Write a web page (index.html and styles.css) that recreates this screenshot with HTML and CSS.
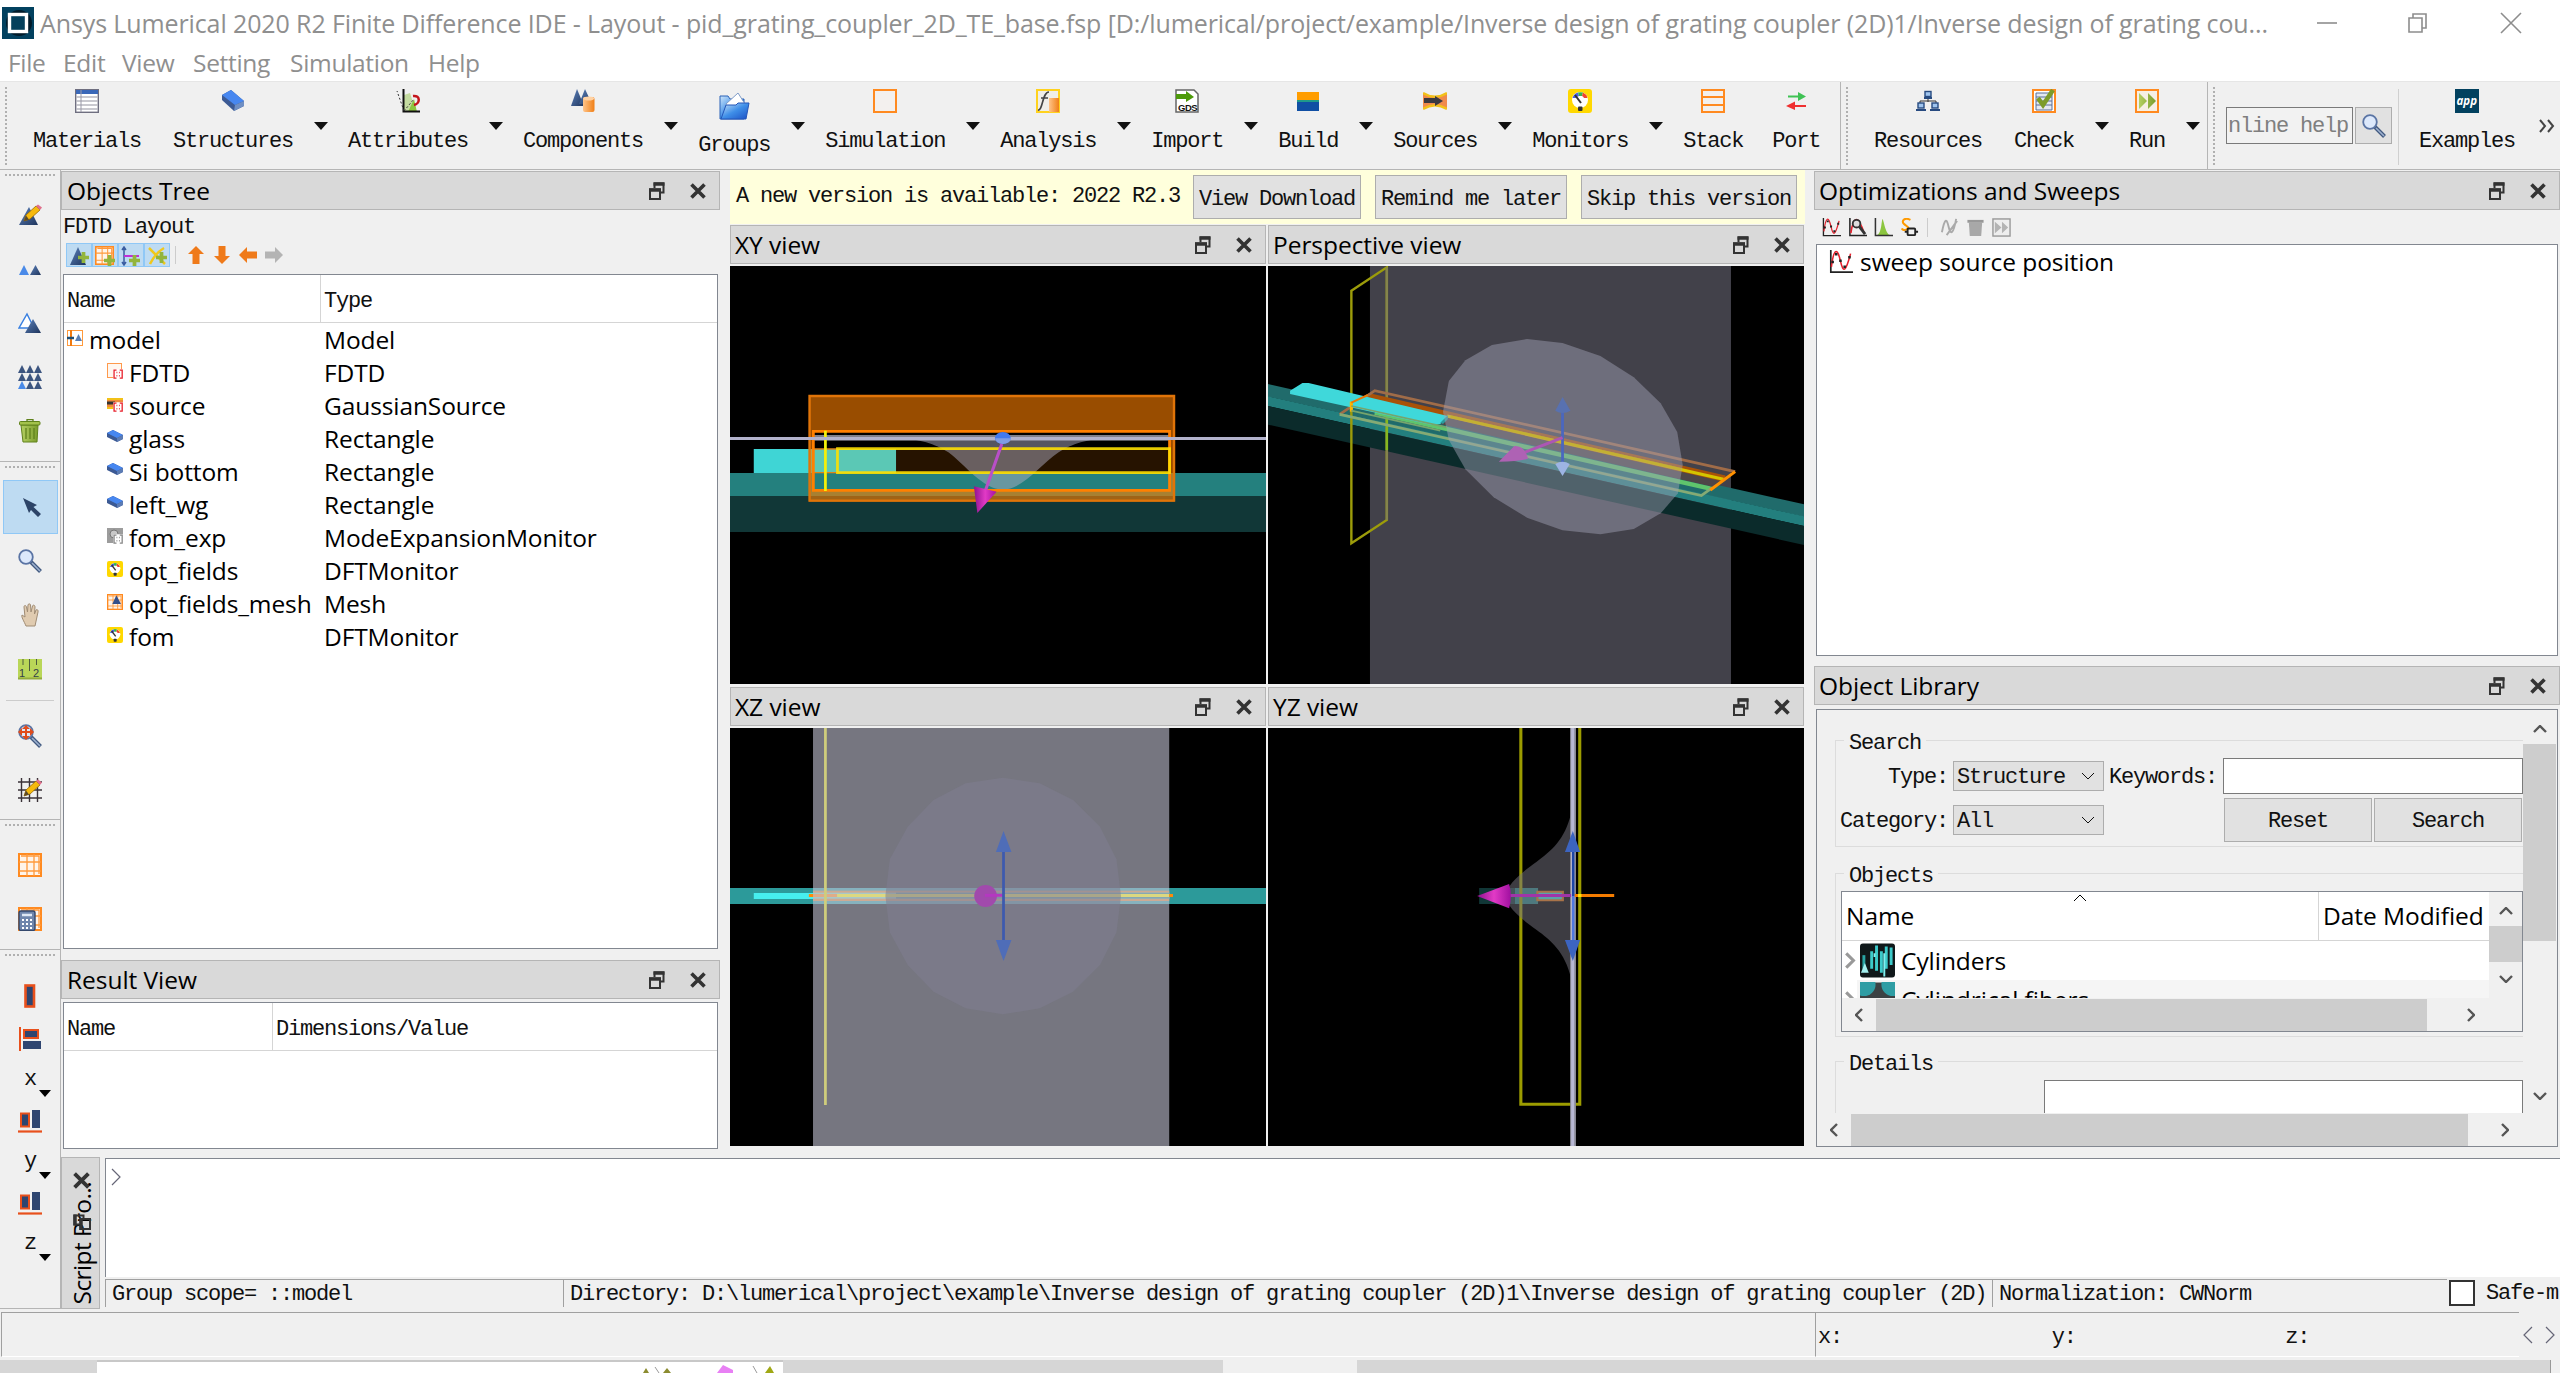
FILE: index.html
```html
<!DOCTYPE html>
<html lang="en">
<head>
<meta charset="utf-8">
<title>Ansys Lumerical 2020 R2 Finite Difference IDE</title>
<link rel="stylesheet" href="styles.css">
</head>
<body>
<svg class="defs" width="0" height="0">
  <defs>
    <linearGradient id="navy" x1="0" y1="0" x2="1" y2="1"><stop offset="0" stop-color="#5d83bd"/><stop offset="1" stop-color="#1f355c"/></linearGradient>
    <linearGradient id="barrel" x1="0" y1="0" x2="1" y2="0"><stop offset="0" stop-color="#ffc489"/><stop offset="1" stop-color="#f07f16"/></linearGradient>
    <linearGradient id="folder" x1="0" y1="0" x2="1" y2="1"><stop offset="0" stop-color="#cfe6fa"/><stop offset=".5" stop-color="#3f8fe8"/><stop offset="1" stop-color="#1a4fc4"/></linearGradient>
    <linearGradient id="cone" x1="0" y1="0" x2="1" y2="0"><stop offset="0" stop-color="#8e128e"/><stop offset=".5" stop-color="#e23ac6"/><stop offset="1" stop-color="#a010a0"/></linearGradient>
    <linearGradient id="green" x1="0" y1="0" x2="1" y2="0"><stop offset="0" stop-color="#b4cf62"/><stop offset="1" stop-color="#7a9c2c"/></linearGradient>
  </defs>
  <symbol id="float" viewBox="0 0 16 18"><path d="M5.500 6V1.500H14.500V10.500H11" fill="none" stroke="#333" stroke-width="2"/><path d="M4.500 2H15.500" stroke="#333" stroke-width="3.500"/><path d="M1 7.500H11V17H1Z" fill="none" stroke="#333" stroke-width="2"/><path d="M0 8H12" stroke="#333" stroke-width="3.500"/></symbol>
  <symbol id="close" viewBox="0 0 16 16"><path d="M1.500 1.500L14.500 14.500M14.500 1.500L1.500 14.500" stroke="#333" stroke-width="3.600" fill="none"/></symbol>
  <symbol id="pencil" viewBox="0 0 24 24"><path d="M6 18L8 12L18 3L22 7L12 16Z" fill="#f6b90c" stroke="#9a6a00" stroke-width=".8"/><path d="M6 18L8 12.500L11 16.500Z" fill="#5b4a2a"/><path d="M18 3L20 1.500L24 4.500L22 7Z" fill="#e0708c"/></symbol>
  <symbol id="box" viewBox="0 0 24 24"><path d="M1 6L10 1L23 12V17L13 22L1 11Z" fill="#3c5a94"/><path d="M1 6L10 1L23 12L14 16Z" fill="#4787f0"/><path d="M14 16L23 12V17L13 22Z" fill="#6f8fc4"/></symbol>
  <symbol id="boxs" viewBox="0 0 16 16"><path d="M0 4L6 1L16 6V10L10 13L0 8Z" fill="#3c5a94"/><path d="M0 4L6 1L16 6L10 9Z" fill="#4787f0"/><path d="M10 9L16 6V10L10 13Z" fill="#5c7cb4"/></symbol>
  <symbol id="gauge" viewBox="0 0 24 24"><rect width="24" height="24" rx="3" fill="#ffd800"/><circle cx="12" cy="11" r="8" fill="#fff"/><path d="M4.500 9A8 8 0 0 1 10 3.500L11 7A5 5 0 0 0 8 9Z" fill="#4a60e8"/><path d="M10 3.500A8 8 0 0 1 15 3.600L14 7H11Z" fill="#35b64a"/><path d="M15 3.600A8 8 0 0 1 19.500 9L16 9A5 5 0 0 0 14 7Z" fill="#f0442c"/><path d="M7 6L13 14" stroke="#333" stroke-width="2"/><rect x="10" y="17.500" width="4.500" height="4.500" rx="1" fill="#333"/></symbol>
  <symbol id="lens" viewBox="0 0 24 24"><path d="M13 13L22.500 22.500" stroke="#41597f" stroke-width="4"/><path d="M14 14L22 22" stroke="#9fb2d0" stroke-width="1.600"/><circle cx="8" cy="8" r="6.800" fill="#dce8fb" stroke="#5a74a4" stroke-width="1.800"/></symbol>
  <symbol id="sweep" viewBox="0 0 20 20"><path d="M1.500 0V18.500H20" stroke="#222" stroke-width="1.400" fill="none"/><path d="M2 14C4 -2 7 -2 9.500 9S14 18 18 3" stroke="#e4202c" stroke-width="1.300" fill="none"/><path d="M3 10h.1M6 3.500h.1M9.500 9h.1M13 14h.1M17 6h.1" stroke="#222" stroke-width="2" stroke-linecap="square"/></symbol>
  <symbol id="grid" viewBox="0 0 24 24"><rect x="1" y="1" width="22" height="22" fill="#fff4ea" stroke="#ff8a20" stroke-width="2"/><path d="M1 9H23M1 18H23M9 1V23M16 1V23M3 3H21V21" stroke="#ff9a3c" stroke-width="1.300" fill="none"/></symbol>
  <symbol id="script" viewBox="0 0 16 16"><rect x="4" y="4" width="12" height="12" fill="#fff"/><path d="M8 5H5V15H8M12 5H15V15H12M8 8h1M11 8h1M8 12h1M11 12h1" stroke="currentColor" stroke-width="1.600" fill="none"/></symbol>
  <symbol id="plus" viewBox="0 0 10 10"><path d="M3.300 0H6.700V3.300H10V6.700H6.700V10H3.300V6.700H0V3.300H3.300Z" fill="#93b53c"/></symbol>
  <symbol id="uparr" viewBox="0 0 18 18"><path d="M9 0L17 8H12.500V18H5.500V8H1Z"/></symbol>
  <symbol id="chev" viewBox="0 0 14 8"><path d="M1 1L7 7L13 1" fill="none" stroke="currentColor"/></symbol>
</svg>

<div class="window">
  <header class="titlebar">
    <svg class="logo" width="32" height="32" viewBox="0 0 32 32"><rect width="32" height="32" fill="#02415f"/><circle cx="17" cy="16" r="13" fill="#011b2a"/><rect x="7.500" y="7.500" width="17" height="17" fill="#04405c" stroke="#fff" stroke-width="3.400"/></svg>
    <span class="caption">Ansys Lumerical 2020 R2 Finite Difference IDE - Layout - pid_grating_coupler_2D_TE_base.fsp [D:/lumerical/project/example/Inverse design of grating coupler (2D)1/Inverse design of grating cou...</span>
    <svg class="winbtns" width="206" height="22" viewBox="0 0 206 22" fill="none" stroke="#8d8d8d" stroke-width="1.600"><path d="M0 11H20"/><path d="M92 6H105V20H92ZM96 6V2H109V16H105"/><path d="M184 1L204 21M204 1L184 21"/></svg>
  </header>
  <nav class="menubar"><span>File</span><span>Edit</span><span>View</span><span>Setting</span><span>Simulation</span><span>Help</span></nav>

  <section class="toolbar">
    <div class="band b1"><i class="vgrip"></i>
      <div class="tb"><svg viewBox="0 0 24 24"><rect x=".7" y=".7" width="22.600" height="22.600" fill="#fff" stroke="#6f6f80" stroke-width="1.400"/><rect x="1" y="1" width="22" height="4" fill="#3a68b8"/><path d="M1 8H23M1 12H23M1 16H23M1 20H23" stroke="#b8b8c0" stroke-width="1.500"/><path d="M6 1V23" stroke="#9a9aa8"/></svg><span>Materials</span></div>
      <div class="tb drop"><svg viewBox="0 0 24 24"><use href="#box"/></svg><span>Structures</span></div>
      <div class="tb drop"><svg viewBox="0 0 24 24"><path d="M8 23V6L14 4L20 23Z" fill="#c4dba0"/><path d="M12 23L18 10L21 23Z" fill="#8cc63f"/><path d="M7.500 0V22.500H24" stroke="#111" stroke-width="2" fill="none"/><path d="M8 22L1 2" stroke="#333" stroke-dasharray="2 2"/><path d="M8 22L18 10" stroke="#333" stroke-dasharray="2 2"/><path d="M17 7C25 6 24 15 18 16" stroke="#c4151c" stroke-width="2.500" fill="none"/></svg><span>Attributes</span></div>
      <div class="tb drop"><svg viewBox="0 0 24 24"><path d="M6 0L13 17H0Z" fill="url(#navy)"/><path d="M14 0L21 15H8Z" fill="url(#navy)"/><rect x="12" y="8" width="11.500" height="15" rx="2" fill="url(#barrel)"/><ellipse cx="17.700" cy="9.500" rx="5.500" ry="2" fill="#ffd2a4"/></svg><span>Components</span></div>
      <div class="tb drop groups"><svg viewBox="0 0 32 28"><path d="M2 27V4H10L12 7H26V27Z" fill="url(#folder)" stroke="#2b62b8"/><path d="M8 12L20 1L27 12L20 20H8Z" fill="#fff" stroke="#7f9cc8"/><path d="M3 27L8 13H18L20 11H31L28 27Z" fill="url(#folder)" stroke="#2456b8"/></svg><span>Groups</span></div>
      <div class="tb drop"><svg viewBox="0 0 24 24"><rect x="1" y="1" width="22" height="22" fill="#f3f0ee" stroke="#ff8a20" stroke-width="2"/></svg><span>Simulation</span></div>
      <div class="tb drop"><svg viewBox="0 0 24 24"><rect x="1" y="1" width="22" height="22" fill="#f0eee8" stroke="#ffd21e" stroke-width="2"/><path d="M2 21C7 22 6 3 13 3M5 9H12" stroke="#444" stroke-width="1.700" fill="none"/><rect x="13" y="9" width="10" height="14" fill="url(#barrel)"/></svg><span>Analysis</span></div>
      <div class="tb drop"><svg viewBox="0 0 24 24"><path d="M1 1H19L23 5V23H1Z" fill="#fff" stroke="#666" stroke-width="1.500"/><path d="M1 5H11V2L19 8L11 13V10H1Z" fill="#4d9a0a"/><text x="3" y="22" font-family="Liberation Sans" font-size="9.500" font-weight="bold" letter-spacing="-.5" fill="#111">GDS</text></svg><span>Import</span></div>
      <div class="tb drop"><svg viewBox="0 0 24 24"><path d="M1 3H23V11H1Z" fill="#ff9d00"/><path d="M1 11H23V13H1Z" fill="#1f9a8a"/><path d="M1 13H23V22H1Z" fill="#104fa4"/></svg><span>Build</span></div>
      <div class="tb drop"><svg viewBox="0 0 24 24"><path d="M0 4C8 8 16 8 24 4V20C16 16 8 16 0 20Z" fill="#f08a4c"/><path d="M0 4C8 9 16 9 24 4M0 20C8 15 16 15 24 20" stroke="#f2c118" stroke-width="2.500" fill="none"/><path d="M1 9H12V7L20 12L12 17V14H1Z" fill="#3a3940"/></svg><span>Sources</span></div>
      <div class="tb drop"><svg viewBox="0 0 24 24"><use href="#gauge"/></svg><span>Monitors</span></div>
      <div class="tb"><svg viewBox="0 0 24 24"><path d="M1 1H23V23H1ZM1 8H23M1 16H23" fill="#f3f0ee" stroke="#ff8a20" stroke-width="2"/></svg><span>Stack</span></div>
      <div class="tb port"><svg viewBox="0 0 24 24"><path d="M4 6.500H14V3L22 7.500L14 12V8.500H4Z" fill="#3fc254"/><path d="M22 16H11V12.500L2 17L11 21V18H22Z" fill="#ef3030"/></svg><span>Port</span></div>
    </div>
    <div class="band b2"><i class="vgrip"></i>
      <div class="tb"><svg viewBox="0 0 24 24"><path d="M12 8V13M4 16V12H20V16" stroke="#333" fill="none"/><g fill="#9fc4ee" stroke="#274a80" stroke-width="1.400"><rect x="9" y="2.500" width="6" height="5"/><rect x="2" y="14" width="6" height="5"/><rect x="16" y="14" width="6" height="5"/></g><path d="M8 9H16M0 21H10M14 21H24" stroke="#274a80" stroke-width="2"/></svg><span>Resources</span></div>
      <div class="tb drop"><svg viewBox="0 0 24 24"><rect x="1" y="1" width="22" height="22" fill="#fff" stroke="#ff8a20" stroke-width="2"/><path d="M4 4H20V21H4ZM4 8H20M4 12H20M4 16H20" fill="#e4e8f0" stroke="#5a6e98"/><path d="M6 9L11 16L21 1" stroke="#7c9c2a" stroke-width="4.500" fill="none"/></svg><span>Check</span></div>
      <div class="tb drop"><svg viewBox="0 0 24 24"><rect x="1" y="1" width="22" height="22" fill="#f6efe4" stroke="#ff8a20" stroke-width="2"/><path d="M4 4L12 12L4 20ZM13 4L21 12L13 20Z" fill="url(#green)"/></svg><span>Run</span></div>
    </div>
    <div class="band b3"><i class="vgrip"></i>
      <div class="help">nline help</div><div class="helpbtn"><svg width="24" height="24"><use href="#lens"/></svg></div>
      <i class="vsep"></i>
      <div class="tb"><svg viewBox="0 0 24 24"><rect width="24" height="24" fill="#02415f"/><text x="1.500" y="16" font-family="Open Sans" font-size="11.500" font-weight="bold" font-style="italic" fill="#fff" letter-spacing="0">app</text></svg><span>Examples</span></div>
      <svg class="more" width="18" height="14" viewBox="0 0 18 14"><path d="M2 1L7 7L2 13M10 1L15 7L10 13" fill="none" stroke="#444" stroke-width="2"/></svg>
    </div>
  </section>

  <main class="main">
    <aside class="tools">
      <div class="tg"><i class="hgrip"></i>
        <div class="tool"><svg viewBox="0 0 24 24"><path d="M11 4L20 22H1Z" fill="url(#navy)"/><use href="#pencil"/></svg></div>
        <div class="tool"><svg viewBox="0 0 24 24"><path d="M6 8L11 18H1Z" fill="#4a8ae8"/><path d="M17.500 8L23 18H12Z" fill="url(#navy)"/></svg></div>
        <div class="tool"><svg viewBox="0 0 24 24"><path d="M9 3L16 17H1Z" fill="#fff" stroke="#3a80e0" stroke-width="1.500"/><path d="M15 8L23 22H7Z" fill="url(#navy)"/></svg></div>
        <div class="tool"><svg viewBox="0 0 24 24"><path d="M4 0L8 8H0ZM12 0L16 8H8ZM20 0L24 8H16ZM4 8L8 16H0ZM12 8L16 16H8ZM20 8L24 16H16ZM12 16L16 24H8ZM20 16L24 24H16Z" fill="#3c5580"/><path d="M4 16L8 24H0Z" fill="#4a8ae8"/></svg></div>
        <div class="tool"><svg viewBox="0 0 24 24"><path d="M3 6H20L19 23H5Z" fill="url(#green)" stroke="#60821c"/><rect x="1.500" y="2.500" width="20.500" height="3.500" rx="1" fill="#a3c24c" stroke="#60821c"/><path d="M9 2V.7H15V2M8 9V20M12 9V20M16 9V20" stroke="#60821c" fill="none" stroke-width="1.300"/></svg></div>
      </div>
      <div class="tg g2"><i class="hgrip"></i>
        <div class="tool on"><svg viewBox="0 0 24 24"><path d="M4 3L18 10L14.500 12L22 19L19 22L12 15L10 18Z" fill="#2d4468"/></svg></div>
        <div class="tool"><svg viewBox="0 0 24 24"><use href="#lens"/></svg></div>
        <div class="tool"><svg viewBox="0 0 24 24"><path d="M8 23C6 18 3 14 4 12L7 14L6 4C6 2 8 2 8.500 4L9.500 9L10 2C10 .5 12.500 .5 12.500 2L13 9L14.500 3C15 1.500 17 2 17 4L16.500 11L18 7C19 6 20.500 7 20 9L17 23Z" fill="#e0cbb0" stroke="#a08c74"/></svg></div>
        <div class="tool"><svg viewBox="0 0 24 24"><rect y="2" width="24" height="20" fill="#b9d658"/><path d="M0 21.500H24" stroke="#93ad3c" stroke-width="2"/><path d="M5 2V8M11.500 2V14M18.500 2V8" stroke="#4c5c3c"/><text x="1" y="20" font-family="Liberation Sans" font-size="11" fill="#34404a">1</text><text x="15" y="20" font-family="Liberation Sans" font-size="11" fill="#34404a">2</text></svg></div>
        <i class="hsep"></i>
        <div class="tool"><svg viewBox="0 0 24 24"><use href="#lens"/><path d="M0 8L4 4V12ZM16 8L12 4V12ZM8 1L4 5H12ZM8 16L4 12H12Z" fill="#e04c1c"/><path d="M2 8H14M8 3V14" stroke="#e04c1c" stroke-width="2"/></svg></div>
        <div class="tool"><svg viewBox="0 0 24 24"><path d="M0 4H24M0 12H24M0 20H24M3.500 0V24M11.500 0V24M19.500 0V24" stroke="#3a3238" stroke-width="1.400"/><use href="#pencil"/></svg></div>
      </div>
      <div class="tg g3"><i class="hgrip"></i>
        <div class="tool"><svg viewBox="0 0 24 24"><use href="#grid"/></svg></div>
        <div class="tool"><svg viewBox="0 0 24 24"><use href="#grid"/><rect x="1" y="4" width="16" height="19.500" rx="2" fill="#6f86ac" stroke="#34486c" stroke-width="1.400"/><path d="M4 8H14" stroke="#dfe8f4" stroke-width="2.500"/><path d="M4 13H14M4 17H14M4 21H14" stroke="#fff" stroke-width="2" stroke-dasharray="2 2"/></svg></div>
      </div>
      <div class="tg g4"><i class="hgrip"></i>
        <div class="tool first"><svg viewBox="0 0 24 24"><rect x="7.500" y="1.500" width="8.500" height="21" fill="#2e4570" stroke="#e8501c" stroke-width="2.600"/></svg></div>
        <div class="tool axis"><svg viewBox="0 0 24 24"><path d="M2 0V24" stroke="#e8501c" stroke-width="2"/><rect x="6" y="3" width="14" height="8" fill="#2e4570" stroke="#e8501c" stroke-width="2"/><rect x="5" y="14" width="18" height="8" fill="#2e4570"/></svg><span>x</span></div>
        <div class="tool axis"><svg viewBox="0 0 24 24"><path d="M0 22.500H24" stroke="#e8501c" stroke-width="2.200"/><rect x="3" y="4.500" width="8" height="13" fill="#2e4570" stroke="#e8501c" stroke-width="2"/><rect x="14" y="1" width="8" height="18" fill="#2e4570"/></svg><span>y</span></div>
        <div class="tool axis"><svg viewBox="0 0 24 24"><path d="M0 22.500H24" stroke="#e8501c" stroke-width="2.200"/><rect x="3" y="4.500" width="8" height="13" fill="#2e4570" stroke="#e8501c" stroke-width="2"/><rect x="14" y="1" width="8" height="18" fill="#2e4570"/></svg><span>z</span></div>
      </div>
    </aside>

    <div class="workspace">
      <div class="docks">
        <section class="left">
          <h2 class="dock"><span>Objects Tree</span><svg class="fl"><use href="#float"/></svg><svg class="cl"><use href="#close"/></svg></h2>
          <div class="mode">FDTD Layout</div>
          <div class="minibar">
            <b><svg viewBox="0 0 20 20"><path d="M9 1L17 19H1Z" fill="url(#navy)"/><use href="#plus" x="9" y="6" width="11" height="11"/></svg></b>
            <b><svg viewBox="0 0 20 20"><use href="#grid" width="19" height="19"/><use href="#plus" x="9" y="9" width="11" height="11"/></svg></b>
            <b><svg viewBox="0 0 20 20"><path d="M3 1V19M1 4L3 1L5 4M1 16L3 19L5 16" stroke="#3a5ca0" stroke-width="1.500" fill="none"/><path d="M3 10H18" stroke="#c030d8" stroke-width="2"/><use href="#plus" x="8" y="9" width="11" height="11"/></svg></b>
            <b><svg viewBox="0 0 20 20"><path d="M2 2L18 18M17 2C10 6 6 12 3 18" stroke="#f0c81c" stroke-width="2.500" fill="none"/><use href="#plus" x="9" y="6" width="11" height="11"/></svg></b>
            <i></i>
            <svg class="ar"><use href="#uparr" fill="#ef7a1a"/></svg><svg class="ar down"><use href="#uparr" fill="#ef7a1a"/></svg><svg class="ar lft"><use href="#uparr" fill="#ef7a1a"/></svg><svg class="ar rgt"><use href="#uparr" fill="#b4b4b4"/></svg>
          </div>
          <div class="tree">
            <div class="thead"><span>Name</span><span>Type</span></div>
            <div class="row root"><span><svg viewBox="0 0 16 16"><rect x=".5" y=".5" width="15" height="15" fill="#fff" stroke="#ff9a3c"/><path d="M4 0V16" stroke="#f07a10" stroke-width="2"/><path d="M0 8H7" stroke="#1d4e74" stroke-width="2.500"/><path d="M11.500 4L15 11H8Z" fill="#5a7fb4"/></svg>model</span><span>Model</span></div>
            <div class="row"><span><svg viewBox="0 0 16 16" class="red"><rect x=".5" y=".5" width="14" height="14" fill="#fff7f0" stroke="#ff9a4c"/><use href="#script" x="3" y="3" width="13" height="13"/></svg>FDTD</span><span>FDTD</span></div>
            <div class="row"><span><svg viewBox="0 0 16 16" class="red"><path d="M0 3H16V12H0Z" fill="#ef8a3c"/><path d="M0 3H16M0 12H16" stroke="#f2c118" stroke-width="2"/><path d="M0 7H8" stroke="#333" stroke-width="3"/><use href="#script" x="3" y="3" width="13" height="13"/></svg>source</span><span>GaussianSource</span></div>
            <div class="row"><span><svg viewBox="0 0 16 16"><use href="#boxs"/></svg>glass</span><span>Rectangle</span></div>
            <div class="row"><span><svg viewBox="0 0 16 16"><use href="#boxs"/></svg>Si bottom</span><span>Rectangle</span></div>
            <div class="row"><span><svg viewBox="0 0 16 16"><use href="#boxs"/></svg>left_wg</span><span>Rectangle</span></div>
            <div class="row"><span><svg viewBox="0 0 16 16" class="gray"><rect width="16" height="15" fill="#9c9c9c"/><circle cx="7" cy="6" r="4" fill="#c8c8c8" stroke="#777"/><use href="#script" x="3" y="3" width="13" height="13"/></svg>fom_exp</span><span>ModeExpansionMonitor</span></div>
            <div class="row"><span><svg viewBox="0 0 24 24"><use href="#gauge"/></svg>opt_fields</span><span>DFTMonitor</span></div>
            <div class="row"><span><svg viewBox="0 0 24 24"><use href="#grid"/><path d="M14 2L21 15H8Z" fill="#34508a"/></svg>opt_fields_mesh</span><span>Mesh</span></div>
            <div class="row"><span><svg viewBox="0 0 24 24"><use href="#gauge"/></svg>fom</span><span>DFTMonitor</span></div>
          </div>
          <h2 class="dock result"><span>Result View</span><svg class="fl"><use href="#float"/></svg><svg class="cl"><use href="#close"/></svg></h2>
          <div class="rtable"><div class="thead"><span>Name</span><span>Dimensions/Value</span></div></div>
        </section>

        <section class="center">
          <div class="banner"><span>A new version is available: 2022 R2.3</span><button class="bt1">View Download</button><button class="bt2">Remind me later</button><button class="bt3">Skip this version</button></div>
          <div class="views">
            <article>
              <h2 class="dock"><span>XY view</span><svg class="fl"><use href="#float"/></svg><svg class="cl"><use href="#close"/></svg></h2>
              <svg class="scene" viewBox="6 138 1556 1254" preserveAspectRatio="none">
                <rect x="6" y="759" width="1556" height="69" fill="#24807e"/><rect x="6" y="828" width="1556" height="108" fill="#113737"/>
                <rect x="75" y="687" width="413" height="72" fill="#3fd5d5"/>
                <path d="M235 525H1297V845H235ZM248 634V811H1282V634Z" fill="#ff8000" fill-opacity=".6" fill-rule="evenodd"/>
                <rect x="252" y="687" width="1030" height="72" fill="#ff8000" fill-opacity=".15"/>
                <path d="M250 687H318M250 758H318" stroke="#e08418" stroke-width="4"/>
                <path d="M237 528H1295V842H237Z" fill="none" stroke="#e07408" stroke-width="7"/>
                <rect x="250" y="645" width="1032" height="17" fill="#80808a"/>
                <path d="M484 655C560 656 600 672 640 697C690 735 740 809 798 809S905 735 960 697C1000 672 1040 656 1115 655Z" fill="#b0b0c4" fill-opacity=".49"/>
                <path d="M248 634H1282V811H248Z" fill="none" stroke="#ff8000" stroke-width="8"/>
                <path d="M318 686H1282V758H318Z" fill="none" stroke="#ffe000" stroke-opacity=".9" stroke-width="8"/>
                <path d="M283 632V813" stroke="#f4f00a" stroke-width="8"/>
                <path d="M6 655.500H1562" stroke="#b2b2cc" stroke-width="9"/>
                <ellipse cx="798" cy="654" rx="23" ry="18" fill="#4379ee"/><path d="M776 655H822C820 666 810 672 798 672S778 666 776 655Z" fill="#7f9ce4"/>
                <path d="M795 672L748 810" stroke="#b94fc8" stroke-width="9"/>
                <path d="M714 799L780 815L724 879Z" fill="url(#cone)"/>
              </svg>
            </article>
            <article>
              <h2 class="dock"><span>Perspective view</span><svg class="fl"><use href="#float"/></svg><svg class="cl"><use href="#close"/></svg></h2>
              <svg class="scene" viewBox="0 138 1556 1254" preserveAspectRatio="none">
                <rect x="296" y="138" width="1048" height="1254" fill="#42414a"/>
                <path d="M0 492L1556 853V890L0 530Z" fill="#206b6b"/><path d="M0 529L1556 889V918L0 558Z" fill="#237f7e"/><path d="M0 558L1556 918V975L0 614Z" fill="#0b2b2b"/>
                <path d="M242 212L345 142V900L242 970Z" fill="none" stroke="#9c9c0a" stroke-width="7"/>
                <path d="M345 142V900" stroke="#84844c" stroke-width="7"/><path d="M345 590V690" stroke="#86b820" stroke-width="7"/>
                <path d="M520 580L1330 768L1290 800L500 612Z" fill="#4e4648"/>
                <path d="M290 528L1326 776" stroke="#a85208" stroke-width="19"/><path d="M520 588L1322 778" stroke="#d4c400" stroke-width="9"/>
                <path d="M310 578L1284 806" stroke="#5fc46c" stroke-width="13"/>
                <path d="M208 583L310 512L1356 755" fill="none" stroke="#a06c48" stroke-width="8"/><path d="M208 583L1258 827L1290 803" fill="none" stroke="#86aa74" stroke-width="8"/>
                <path d="M1356 755L1284 810" stroke="#ff9000" stroke-width="9"/>
                <path d="M64 522V512L100 489H118L522 588L500 612L475 615Z" fill="#3fd8da"/>
                <path d="M500 608L522 586V598L508 612Z" fill="#299a9c"/>
                <path d="M242 545V575" stroke="#ffb400" stroke-width="9"/>
                <path d="M242 558L520 622M242 572L500 632" stroke="#76a46c" stroke-width="5"/>
                <path d="M242 548L290 525" stroke="#e87808" stroke-width="6"/>
                <path d="M752 357L855 369L965 408L1062 472L1140 550L1188 636L1204 735L1190 820L1140 880L1062 927L965 943L855 931L752 893L655 832L573 748L525 660L508 575L525 483L573 421L650 375Z" fill="#a4a3b8" fill-opacity=".46"/>
                <path d="M530 590L1200 748" stroke="#c8ac18" stroke-opacity=".55" stroke-width="8"/>
                <path d="M855 575V735" stroke="#4a67c0" stroke-width="8"/><path d="M855 531L878 572Q855 586 834 572Z" fill="#5871b0"/><path d="M855 768L876 732Q855 718 834 732Z" fill="#9db4e4"/>
                <path d="M855 653L745 697" stroke="#ad56b4" stroke-width="9"/><path d="M670 725L715 678Q745 676 755 716Q730 724 670 725Z" fill="#ae62b4"/>
              </svg>
            </article>
            <article>
              <h2 class="dock"><span>XZ view</span><svg class="fl"><use href="#float"/></svg><svg class="cl"><use href="#close"/></svg></h2>
              <svg class="scene" viewBox="6 144 1556 1254" preserveAspectRatio="none">
                <rect x="6" y="624" width="1556" height="48" fill="#2c9a9a"/><rect x="75" y="639" width="172" height="18" fill="#46eeee"/>
                <rect x="247" y="144" width="1034" height="1254" fill="#767680"/>
                <rect x="247" y="624" width="1034" height="48" fill="#86b2be"/>
                <rect x="247" y="632" width="1034" height="31" fill="#cdaa94"/><rect x="247" y="638" width="1034" height="18" fill="#a8c8c8"/>
                <rect x="488" y="638" width="793" height="18" fill="#86a8b4"/>
                <rect x="247" y="642" width="70" height="9" fill="#dfac88"/><rect x="317" y="642" width="964" height="9" fill="#dcd880"/>
                <rect x="235" y="642" width="12" height="9" fill="#ff8a08"/><rect x="1281" y="642" width="11" height="9" fill="#ff8a08"/>
                <path d="M798 293L905 310L1002 360L1080 440L1128 538L1141 648L1128 757L1080 855L1002 935L905 985L798 1003L690 985L597 935L522 855L470 757L457 648L470 538L522 440L597 360L690 310Z" fill="#7f7d90" fill-opacity=".55"/>
                <path d="M283 144V1275" stroke="#cfcd7c" stroke-width="8"/>
                <circle cx="748" cy="648" r="33" fill="#a14aac"/><path d="M746 646H798" stroke="#b438c0" stroke-width="9"/>
                <path d="M800 510V786" stroke="#3d5aae" stroke-width="8"/><path d="M800 453L823 516H778ZM800 843L823 780H778Z" fill="#4f6db8"/>
              </svg>
            </article>
            <article>
              <h2 class="dock"><span>YZ view</span><svg class="fl"><use href="#float"/></svg><svg class="cl"><use href="#close"/></svg></h2>
              <svg class="scene" viewBox="0 144 1556 1254" preserveAspectRatio="none">
                <rect x="613" y="624" width="104" height="48" fill="#113737"/><rect x="717" y="624" width="67" height="48" fill="#24807e"/><rect x="784" y="635" width="70" height="26" fill="#3fd5d5"/>
                <path d="M734 144V1273H905V144" fill="none" stroke="#9c9c00" stroke-width="9"/>
                <path d="M782 635H856V661H782Z" fill="none" stroke="#e07410" stroke-width="6"/>
                <path d="M880 400C862 480 820 515 780 545C740 575 715 596 700 620V675C715 699 740 720 780 750C820 780 862 815 880 895Z" fill="#75737f" fill-opacity=".52"/>
                <rect x="877" y="144" width="17" height="1254" fill="#8c8c98"/><rect x="880" y="144" width="9" height="1254" fill="#b8b8d4"/>
                <path d="M890 646.500H1005" stroke="#f47c00" stroke-width="9"/><path d="M900 646.500H910" stroke="#ffe000" stroke-width="9"/>
                <path d="M700 646.500H880" stroke="#a035a8" stroke-width="9"/><path d="M607 648L700 612Q710 648 700 685Z" fill="url(#cone)"/>
                <path d="M886 500V648" stroke="#1d46a8" stroke-width="7"/><path d="M886 648V800" stroke="#5078e0" stroke-width="7"/>
                <path d="M885 453L906 516H862ZM885 843L906 780H862Z" fill="#3c64c0"/>
              </svg>
            </article>
          </div>
        </section>

        <section class="right">
          <h2 class="dock"><span>Optimizations and Sweeps</span><svg class="fl"><use href="#float"/></svg><svg class="cl"><use href="#close"/></svg></h2>
          <div class="optbar">
            <svg viewBox="0 0 20 20"><use href="#sweep"/></svg>
            <svg viewBox="0 0 20 20"><path d="M2 0V18.500H20" stroke="#222" stroke-width="1.600" fill="none"/><path d="M3 16C6 -4 11 -2 17 16" stroke="#e4202c" stroke-width="1.700" fill="none"/><circle cx="9" cy="6" r="4" fill="#ddd" stroke="#333" stroke-width="2"/><path d="M12 9L18 17" stroke="#333" stroke-width="3"/></svg>
            <svg viewBox="0 0 20 20"><path d="M3 18C8 17 8 1 9 1S12 17 17 18Z" fill="#8cc63f"/><path d="M1.500 0V18.500H20" stroke="#333" stroke-width="1.600" fill="none"/></svg>
            <svg viewBox="0 0 20 20"><path d="M11 2C5-1 1 3 4 6S11 10 7 12S2 11 2 11" stroke="#ff9a00" stroke-width="2.200" fill="none"/><rect x="8" y="11" width="8" height="7" rx="1" fill="none" stroke="#222" stroke-width="2"/><path d="M5 14.500H8M16 14.500H19" stroke="#222" stroke-width="2"/></svg>
            <i></i>
            <svg viewBox="0 0 20 20"><path d="M2 15C5 0 7 0 9 9S14 18 17 1M7 18L18 3" stroke="#aaa" stroke-width="2" fill="none"/></svg>
            <svg viewBox="0 0 20 20"><path d="M3 5H17L16 19H4Z" fill="#a8a8a8"/><rect x="1.500" y="2" width="17" height="3" fill="#989898"/></svg>
            <svg viewBox="0 0 20 20"><rect x="1" y="1" width="18" height="18" fill="#eee" stroke="#9a9a9a" stroke-width="1.500"/><path d="M3 4L10 10L3 16ZM10.500 4L17 10L10.500 16Z" fill="#b4b4b4"/></svg>
          </div>
          <div class="optlist"><div><svg width="24" height="24"><use href="#sweep"/></svg>sweep source position</div></div>
          <h2 class="dock lib"><span>Object Library</span><svg class="fl"><use href="#float"/></svg><svg class="cl"><use href="#close"/></svg></h2>
          <div class="frame">
            <div class="content">
              <div class="group search"><label class="legend">Search</label>
                <div class="form">
                  <span class="lab">Type:</span><div class="combo">Structure<svg><use href="#chev"/></svg></div><span class="key">Keywords:</span><div class="input"></div>
                  <span class="lab">Category:</span><div class="combo">All<svg><use href="#chev"/></svg></div><span></span><div class="btns"><button>Reset</button><button>Search</button></div>
                </div>
              </div>
              <div class="group objects"><label class="legend">Objects</label>
                <div class="otable">
                  <div class="obody">
                    <div class="olist">
                      <div class="ohead"><span>Name<svg class="sort"><use href="#chev"/></svg></span><span>Date Modified</span></div>
                      <div class="orow"><svg class="exp" viewBox="0 0 10 14"><path d="M1 1L7 7L1 13" fill="none" stroke="#999" stroke-width="2.600"/></svg><svg class="thumb" viewBox="0 0 36 35"><rect width="36" height="35" rx="3" fill="#10181a"/><path d="M12 8V26M17 2V28M22 8V30M27 3V26M32 4V22" stroke="#3ccaca" stroke-width="3"/><path d="M4 12V26" stroke="#2aa4a4" stroke-width="3"/><path d="M25 10V34M15 10V14" stroke="#7ff0f0" stroke-width="2"/><path d="M1 30L5 20L9 30Z" fill="#a4f0f0"/></svg><span>Cylinders</span></div>
                      <div class="orow alt"><svg class="exp" viewBox="0 0 10 14"><path d="M1 1L7 7L1 13" fill="none" stroke="#999" stroke-width="2.600"/></svg><svg class="thumb" viewBox="0 0 36 35"><rect width="36" height="35" rx="3" fill="#3c4244"/><circle cx="4" cy="2" r="12" fill="#2f9da4"/><circle cx="34" cy="2" r="12" fill="#2f9da4"/></svg><span>Cylindrical fibers</span></div>
                    </div>
                    <div class="vs s2"><svg class="up"><use href="#chev"/></svg><b></b><svg><use href="#chev"/></svg></div>
                  </div>
                  <div class="hs h2s"><svg class="lf"><use href="#chev"/></svg><b></b><svg class="rt"><use href="#chev"/></svg></div>
                </div>
              </div>
              <div class="group details"><label class="legend">Details</label><div class="dinput"></div></div>
            </div>
            <div class="vs s1"><svg class="up"><use href="#chev"/></svg><b></b><svg><use href="#chev"/></svg></div>
            <div class="hs h1s"><svg class="lf"><use href="#chev"/></svg><b></b><svg class="rt"><use href="#chev"/></svg></div>
          </div>
        </section>
      </div>

      <section class="scriptdock">
        <div class="tab"><span>Script Pro...</span><svg class="tcl"><use href="#close"/></svg><svg class="tfl"><use href="#float"/></svg></div>
        <div class="console">
          <div class="prompt"><svg width="10" height="18" viewBox="0 0 10 18"><path d="M1 1L9 9L1 17" fill="none" stroke="#667" stroke-width="1.200"/></svg></div>
          <div class="info"><div class="scope">Group scope= ::model</div><div class="dir">Directory: D:\lumerical\project\example\Inverse design of grating coupler (2D)1\Inverse design of grating coupler (2D)</div><div class="norm">Normalization: CWNorm</div><i class="check"></i><div class="safe">Safe-m</div></div>
        </div>
      </section>
    </div>
  </main>

  <footer class="status"><div class="msg"></div><div class="pos"><span>x:</span><span>y:</span><span>z:</span></div><svg width="32" height="18" viewBox="0 0 32 18"><path d="M9 1L1 9L9 17M23 1L31 9L23 17" fill="none" stroke="#667" stroke-width="1.200"/></svg></footer>
  <div class="under"><i class="u1"></i><i class="u2"><svg width="140" height="9" viewBox="0 0 140 9"><path d="M0 9L3 4L6 9ZM20 9L24 4L28 9Z" fill="#8c8c30"/><path d="M12 3L16 9M110 2L114 9" stroke="#999"/><path d="M74 9L80 1L90 6L90 9Z" fill="#e880f4"/><path d="M122 9L127 2L131 9Z" fill="#a0a814"/></svg></i><i class="u3"></i><i class="u4"></i><i class="u5"></i><i class="u6"></i></div>
</div>
</body>
</html>
```

FILE: styles.css
```css
* { box-sizing: border-box; }
body { margin: 0; width: 2560px; height: 1373px; overflow: hidden; background: #f0f0f0; color: #111;
  font: 22px/26px "Liberation Mono", monospace; letter-spacing: -1.2px; }
.defs { position: absolute; }
svg { flex: none; display: block; }
i, b { display: block; font-style: normal; flex: none; }
button { font: inherit; letter-spacing: inherit; color: #111; background: #e1e1e1; border: 1px solid #adadad; padding: 5px 0 0; white-space: pre; flex: none; }
.window { width: 2560px; height: 1373px; display: flex; flex-direction: column; }

.titlebar, .menubar, .dock, .row, .optlist, .ohead, .orow, .tab { font-family: "Open Sans", "Noto Sans", sans-serif; font-size: 24.5px; letter-spacing: -0.05px; white-space: pre; color: #000; }
.titlebar { height: 45px; background: #fff; color: #8f8f8f; display: flex; align-items: center; padding-left: 2px; flex: none; }
.caption { margin-left: 6px; width: 2256px; font-size: 25px; letter-spacing: -0.11px; }
.winbtns { margin-left: 21px; }
.menubar { height: 36px; flex: none; background: #fff; color: #8f8f8f; display: flex; line-height: 36px; padding-left: 8px; letter-spacing: -0.3px; }
.menubar span:nth-child(1) { width: 55px; }
.menubar span:nth-child(2) { width: 59px; }
.menubar span:nth-child(3) { width: 71px; }
.menubar span:nth-child(4) { width: 97px; }
.menubar span:nth-child(5) { width: 138px; }

.toolbar { height: 89px; flex: none; display: flex; border-top: 1px solid #e6e6e6; border-bottom: 1px solid #b5b5b5; }
.band { display: flex; border-right: 1px solid #b5b5b5; padding-top: 7px; flex: none; }
.b1 { width: 1841px; }
.b2 { width: 367px; }
.b3 { width: 352px; border: 0; }
.vgrip { width: 4px; height: 78px; margin: -2px 8px 0 5px; background: repeating-linear-gradient(#b0b0b0 0 2px, transparent 2px 4px) 0 0 / 2px 100% no-repeat; }
.tb { padding: 0 16px; flex: none; position: relative; }
.tb > svg { width: 24px; height: 24px; margin: 0 auto 16px; }
.tb.drop { margin-right: 23px; }
.tb.drop::after { content: ""; position: absolute; right: -19px; top: 33px; border: 7px solid transparent; border-top: 8px solid #111; border-bottom: 0; }
.tb.groups > svg { width: 32px; height: 28px; margin: 3px auto 13px; }
.port { margin-left: -3px; }
.help { width: 127px; height: 37px; margin: 18px 2px 0 1px; border: 1px solid #7a7a7a; background: #f2f2f2; color: #7f7f7f; line-height: 38px; padding-left: 1px; overflow: hidden; flex: none; }
.helpbtn { width: 37px; height: 37px; margin-top: 18px; border: 1px solid #adadad; background: #e1e1e1; display: flex; align-items: center; justify-content: center; flex: none; }
.vsep { width: 1px; height: 76px; margin: 0 4px 0 6px; background: #d0d0d0; }
.more { margin: 30px 0 0 7px; }

.main { height: 1139px; flex: none; display: flex; }
.tools { width: 61px; flex: none; border-right: 1px solid #b5b5b5; border-bottom: 1px solid #b5b5b5; display: flex; flex-direction: column; }
.tg { border-bottom: 1px solid #b5b5b5; height: 292px; flex: none; }
.hgrip { height: 2px; margin: 4px 5px 12px; background: repeating-linear-gradient(90deg, #b0b0b0 0 2px, transparent 2px 4px); }
.tool { height: 54px; display: flex; flex-direction: column; align-items: center; justify-content: center; }
.tool svg { width: 24px; height: 24px; }
.on { margin: 0 2px 0 3px; background: #bedbf2; border: 1px solid #90c8f6; }
.g2 { height: 358px; }
.hsep { height: 1px; margin: 4px 6px 8px; background: #ccc; }
.g3 { height: 130px; }
.g4 { height: auto; border: 0; }
.g4 .hgrip { margin-bottom: 18px; }
.g4 .first { height: 44px; margin-bottom: 9px; }
.axis { height: 82px; justify-content: flex-start; position: relative; }
.axis span { margin-top: 16px; }
.axis::after { content: ""; position: absolute; left: 39px; top: 63px; border: 6.500px solid transparent; border-top: 7px solid #000; border-bottom: 0; }

.workspace { width: 2499px; display: flex; flex-direction: column; }
.docks { height: 987px; display: flex; }
.dock { margin: 0; height: 39px; flex: none; font-weight: 400; background: #d9d9d9; border: 1px solid #b5b5b5; display: flex; align-items: center; padding: 0 13px 0 4px; }
.dock span { flex: 1; }
.fl { width: 16px; height: 18px; margin-right: 25px; }
.cl { width: 16px; height: 16px; }
.left { width: 659px; padding-top: 1px; flex: none; }
.left .dock { padding-left: 5px; }
.mode { padding-left: 2px; height: 33px; line-height: 36px; }
.minibar { height: 24px; margin: 0 0 7px 5px; display: flex; align-items: center; }
.minibar b { width: 26px; height: 24px; background: #bedbf2; border: 1px solid #90c8f6; display: flex; align-items: flex-end; justify-content: center; }
.minibar b svg { width: 20px; height: 20px; }
.minibar i { width: 1px; height: 18px; background: #ccc; margin: 0 11px 0 5px; }
.ar { width: 18px; height: 18px; margin-right: 8px; }
.down { transform: rotate(180deg); }
.lft { transform: rotate(-90deg); }
.rgt { transform: rotate(90deg); }
.tree { margin: 0 2px; height: 675px; background: #fff; border: 1px solid #828790; }
.thead { height: 48px; line-height: 54px; border-bottom: 1px solid #d5d5d5; display: flex; }
.thead span { padding-left: 3px; }
.tree .thead span:first-child { width: 257px; border-right: 1px solid #d5d5d5; }
.row { height: 33px; line-height: 33px; display: flex; letter-spacing: -0.1px; }
.row span { width: 260px; display: flex; align-items: center; padding-left: 43px; }
.root span { padding-left: 3px; }
.row span:last-child { width: 380px; padding-left: 0; }
.row svg { width: 16px; height: 16px; margin: -3px 6px 0 0; }
.red { color: #e8202c; }
.gray { color: #888; }
.result { margin-top: 11px; }
.rtable { margin: 3px 2px 0; height: 147px; background: #fff; border: 1px solid #828790; }
.rtable .thead span:first-child { width: 209px; border-right: 1px solid #d5d5d5; }

.center { width: 1075px; margin-left: 10px; flex: none; }
.banner { height: 54px; background: #ffffdc; display: flex; align-items: center; padding-left: 6px; }
.banner span { width: 457px; white-space: pre; flex: none; }
.banner button { height: 44px; margin-right: 14px; }
.banner .bt1 { width: 168px; }
.banner .bt2 { width: 192px; }
.banner .bt3 { width: 216px; margin: 0; }
.views { display: grid; grid-template-columns: 536px 536px; column-gap: 2px; row-gap: 3px; margin-top: 1px; }
.views article { height: 459px; }
.scene { width: 536px; height: 418px; margin-top: 2px; background: #000; }

.right { margin-left: 9px; width: 746px; padding-top: 1px; flex: none; }
.optbar { height: 34px; padding: 8px 0 0 8px; display: flex; }
.optbar svg { width: 19px; height: 19px; margin-right: 7px; }
.optbar i { width: 1px; height: 19px; background: #ccc; margin: 0 12px 0 1px; }
.optlist { margin: 0 2px; height: 412px; background: #fff; border: 1px solid #828790; }
.optlist div { display: flex; align-items: center; height: 33px; padding-left: 12px; }
.optlist svg { margin-right: 7px; }
.lib { margin-top: 10px; }
.frame { margin: 4px 2px 0; height: 438px; border: 1px solid #828790; display: grid; grid-template: 403px 1fr / 706px 1fr; }
.content { overflow: hidden; }
.group { margin-left: 18px; position: relative; border: 1px solid #dcdcdc; border-right: 0; }
.legend { position: absolute; left: 8px; top: -10px; padding: 0 5px; background: #f0f0f0; }
.search { margin-top: 30px; height: 107px; padding-top: 17px; }
.form { display: grid; grid-template: 36px 44px / 112px 156px 113px 306px; row-gap: 4px; align-items: center; line-height: 36px; }
.lab, .key { text-align: right; padding-top: 4px; }
.key { text-align: left; padding-left: 5px; }
.combo { height: 30px; margin-left: 5px; border: 1px solid #adadad; background: #e1e1e1; line-height: 24px; padding: 4px 8px 0 3px; display: flex; justify-content: space-between; align-items: center; }
.combo svg { width: 14px; height: 8px; margin-top: -4px; }
.input { height: 36px; margin-left: 6px; background: #fff; border: 1px solid #7a7a7a; }
.btns { display: flex; gap: 2px; padding-left: 7px; }
.btns button { width: 148px; height: 44px; padding-top: 3px; }
.objects { margin-top: 26px; height: 164px; padding: 17px 0 0 5px; }
.otable { height: 141px; border: 1px solid #828790; width: 682px; }
.obody { height: 106px; display: flex; background: #fff; overflow: hidden; }
.olist { width: 647px; }
.ohead { height: 49px; border-bottom: 1px solid #d5d5d5; line-height: 48px; display: flex; }
.ohead span { padding-left: 4px; position: relative; }
.ohead span:first-child { width: 477px; border-right: 1px solid #d5d5d5; }
.sort { position: absolute; left: 231px; top: 2px; width: 14px; height: 8px; transform: scaleY(-1); }
.orow { height: 39px; display: flex; align-items: center; padding-left: 3px; }
.exp { width: 12px; height: 17px; margin-right: 3px; }
.thumb { width: 35px; height: 35px; margin-right: 6px; }
.alt { background: linear-gradient(90deg, #fff 15px, #f5f5f5 15px); }
.vs { width: 33px; background: #f0f0f0; display: flex; flex-direction: column; align-items: center; color: #555; }
.vs svg, .hs svg { width: 14px; height: 8px; stroke-width: 2.4; }
.vs .up { transform: scaleY(-1); }
.vs b { width: 100%; background: #cdcdcd; }
.s2 { padding-top: 15px; }
.s2 b { height: 36px; margin: 11px 0 13px; }
.s1 { padding-top: 15px; }
.s1 b { height: 197px; margin: 11px 0 151px; }
.hs { height: 33px; background: #f0f0f0; display: flex; align-items: center; color: #555; }
.hs b { height: 32px; background: #cdcdcd; }
.lf { transform: rotate(90deg); }
.rt { transform: rotate(-90deg); }
.h2s { padding-left: 10px; }
.h2s b { width: 551px; margin: 0 37px 0 10px; }
.h1s { padding-left: 10px; grid-column: 1 / 3; }
.h1s b { width: 617px; margin: 0 30px 0 10px; }
.details { margin-top: 24px; height: 100px; padding: 18px 0 0 208px; }
.dinput { height: 80px; background: #fff; border: 1px solid #7a7a7a; }

.scriptdock { height: 152px; display: flex; }
.tab { width: 39px; height: 152px; background: #d9d9d9; border: 1px solid #b5b5b5; position: relative; }
.tab span { position: absolute; left: 3px; bottom: 4px; writing-mode: vertical-rl; transform: rotate(180deg); line-height: 33px; letter-spacing: -0.6px; }
.tcl { position: absolute; left: 11px; top: 14px; width: 17px; height: 17px; }
.tfl { position: absolute; left: 12px; top: 55px; width: 16px; height: 18px; transform: rotate(-90deg); }
.console { margin-left: 5px; width: 2455px; }
.prompt { height: 119px; margin: 1px 0 2px; background: #fff; border: 1px solid #828790; border-width: 1px 0 0 1px; padding: 9px 0 0 5px; }
.info { display: flex; height: 28px; line-height: 30px; white-space: pre; }
.info div { border: 1px solid #a0a0a0; border-width: 1px 0 0 1px; padding-left: 6px; height: 28px; }
.scope { width: 458px; }
.dir { width: 1429px; }
.norm { width: 455px; }
.info .safe { border: 0; padding-left: 11px; }
.check { width: 26px; height: 26px; margin: 1px 0 0 2px; border: 2px solid #333; background: #fff; }

.status { height: 51px; flex: none; display: flex; padding: 3px 0 3px 1px; align-items: center; }
.status div { height: 45px; border: 1px solid #a0a0a0; border-width: 1px 0 0 1px; border-bottom: 1px solid #fff; }
.msg { width: 1814px; }
.pos { width: 704px; display: flex; line-height: 50px; padding-left: 2px; }
.pos span { width: 234px; }
.status svg { margin-left: 4px; }
.under { height: 13px; display: flex; }
.under i { height: 13px; background: #d6d6d6; }
.u1 { width: 97px; }
.under .u2 { width: 686px; background: #fff; border-top: 2px solid #c8c8c8; padding: 2px 0 0 546px; }
.u3 { width: 440px; }
.under .u4 { width: 134px; background: #f0f0f0; }
.u5 { width: 1193px; }
.under .u6 { width: 10px; background: #f0f0f0; border-left: 1px solid #999; }
```
